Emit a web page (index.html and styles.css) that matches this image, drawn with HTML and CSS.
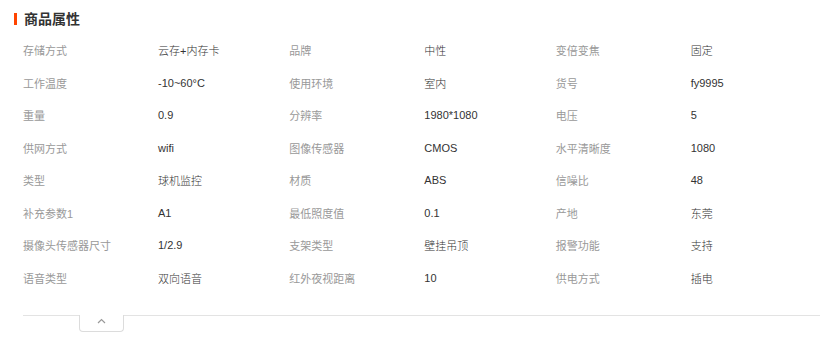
FILE: index.html
```html
<!DOCTYPE html>
<html lang="zh-CN">
<head>
<meta charset="utf-8">
<link rel="stylesheet" href="styles.css">
</head>
<body>
<section class="attrs">
  <h2 class="attrs-title">商品属性</h2>
  <div class="attrs-grid">
    <span class="k">存储方式</span><span class="v">云存+内存卡</span>
    <span class="k">品牌</span><span class="v">中性</span>
    <span class="k">变倍变焦</span><span class="v">固定</span>

    <span class="k">工作温度</span><span class="v">-10~60°C</span>
    <span class="k">使用环境</span><span class="v">室内</span>
    <span class="k">货号</span><span class="v">fy9995</span>

    <span class="k">重量</span><span class="v">0.9</span>
    <span class="k">分辨率</span><span class="v">1980*1080</span>
    <span class="k">电压</span><span class="v">5</span>

    <span class="k">供网方式</span><span class="v">wifi</span>
    <span class="k">图像传感器</span><span class="v">CMOS</span>
    <span class="k">水平清晰度</span><span class="v">1080</span>

    <span class="k">类型</span><span class="v">球机监控</span>
    <span class="k">材质</span><span class="v">ABS</span>
    <span class="k">信噪比</span><span class="v">48</span>

    <span class="k">补充参数1</span><span class="v">A1</span>
    <span class="k">最低照度值</span><span class="v">0.1</span>
    <span class="k">产地</span><span class="v">东莞</span>

    <span class="k">摄像头传感器尺寸</span><span class="v">1/2.9</span>
    <span class="k">支架类型</span><span class="v">壁挂吊顶</span>
    <span class="k">报警功能</span><span class="v">支持</span>

    <span class="k">语音类型</span><span class="v">双向语音</span>
    <span class="k">红外夜视距离</span><span class="v">10</span>
    <span class="k">供电方式</span><span class="v">插电</span>
  </div>
  <div class="attrs-foot">
    <button class="fold" type="button" aria-label="收起">
      <svg width="9" height="6" viewBox="0 0 9 6"><path d="M1 5 L4.5 1.5 L8 5" fill="none" stroke="#999" stroke-width="1.2"/></svg>
    </button>
  </div>
</section>
</body>
</html>
```
FILE: styles.css
```css
html, body {
  margin: 0;
  padding: 0;
  background: #fff;
}
body {
  font-family: "Liberation Sans", "Noto Sans CJK SC", sans-serif;
  font-size: 11px;
  color: #333;
}
.attrs {
  padding-left: 23px;
}
.attrs-title {
  margin: 0 0 0 -9px;
  padding: 4px 0 0 0;
  height: 30px;
  line-height: 30px;
  font-size: 14px;
  font-weight: bold;
  color: #333;
  display: flex;
  align-items: center;
  gap: 7px;
}
.attrs-title::before {
  content: "";
  display: block;
  width: 3px;
  height: 12px;
  background: #ff4400;
}
.attrs-grid {
  display: grid;
  grid-template-columns: repeat(3, 135px 131.35px);
  grid-auto-rows: 32.5px;
  align-items: center;
}
.k {
  color: #999;
  white-space: nowrap;
}
.v {
  color: #333;
  font-weight: 300;
  white-space: nowrap;
}
.attrs-foot {
  margin-top: 21px;
  border-top: 1px solid #e3e3e3;
  height: 22px;
}
.fold {
  display: flex;
  align-items: center;
  justify-content: center;
  margin: -1px 0 0 56px;
  width: 45px;
  height: 17px;
  padding: 0 0 4px;
  background: #fff;
  border: 1px solid #dcdcdc;
  border-top: none;
  border-radius: 0 0 4px 4px;
  cursor: pointer;
}
```
